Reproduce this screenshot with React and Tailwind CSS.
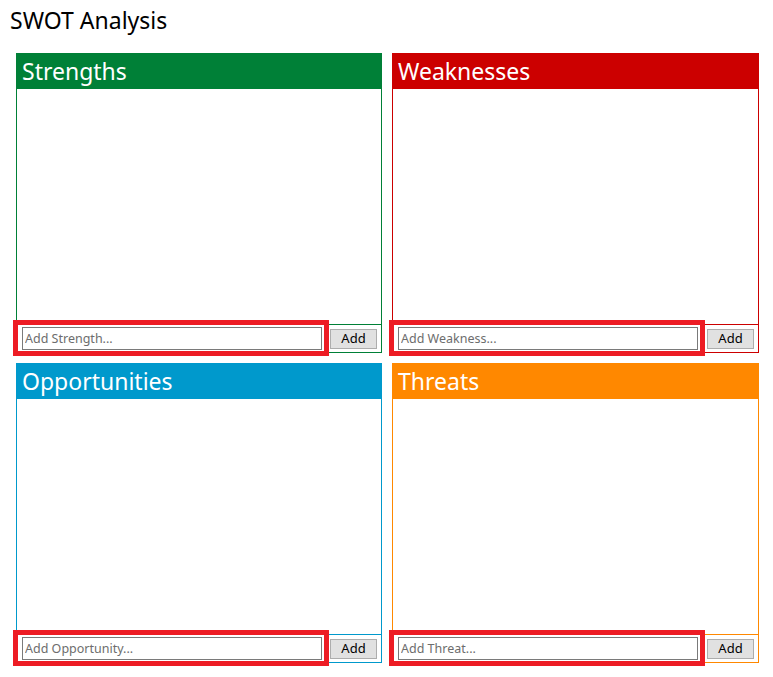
const quadrants = [
  { title: 'Strengths', placeholder: 'Add Strength...', head: 'bg-[#008037]', line: 'border-[#008037]' },
  { title: 'Weaknesses', placeholder: 'Add Weakness...', head: 'bg-[#cc0000]', line: 'border-[#cc0000]' },
  { title: 'Opportunities', placeholder: 'Add Opportunity...', head: 'bg-[#0099cc]', line: 'border-[#0099cc]' },
  { title: 'Threats', placeholder: 'Add Threat...', head: 'bg-[#ff8800]', line: 'border-[#ff8800]' },
];

function Quadrant({ q }) {
  return (
    <div className={`flex h-[300px] flex-col border ${q.line}`}>
      <div className={`-mx-px -mt-px h-[36px] ${q.head} pl-[6px] text-[23px] leading-[37px] text-white`}>
        {q.title}
      </div>
      <div className="flex-1 bg-white" />
      <div className={`flex h-[28px] items-center justify-between border-t ${q.line} pl-[5px] pr-[4px]`}>
        <div className="relative">
          <input
            type="text"
            placeholder={q.placeholder}
            className="block h-[23px] w-[300px] border border-[#7a7a7a] bg-white px-[2px] text-[12.5px] text-black outline-none placeholder:text-[#6d6d6d]"
          />
          {/* highlight box */}
          <div className="pointer-events-none absolute -left-[9px] -top-[7px] h-[36px] w-[316px] border-[5px] border-[#ed1c24]" />
        </div>
        <button className="h-[20px] w-[47px] border border-[#adadad] bg-[#e1e1e1] text-[13px] leading-none text-black">
          Add
        </button>
      </div>
    </div>
  );
}

export default function App() {
  return (
    <div className="min-h-screen bg-white font-['Noto_Sans',sans-serif]">
      <h1 className="pl-[10px] pt-[4px] text-[23px] font-normal leading-[32px] text-black">SWOT Analysis</h1>
      <div className="grid grid-cols-[366px_367px] gap-x-[10px] gap-y-[10px] pl-[16px] pt-[17px]">
        {quadrants.map((q) => (
          <Quadrant key={q.title} q={q} />
        ))}
      </div>
    </div>
  );
}
